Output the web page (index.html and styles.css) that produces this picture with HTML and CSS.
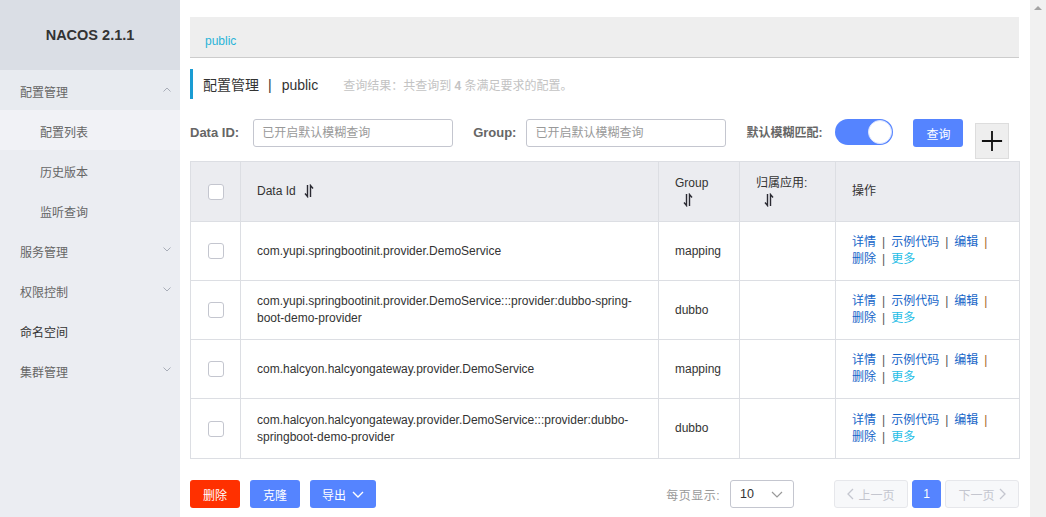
FILE: index.html
```html
<!DOCTYPE html>
<html lang="zh-CN">
<head>
<meta charset="utf-8">
<title>NACOS</title>
<link rel="stylesheet" href="styles.css">
</head>
<body>
<div class="app">
  <aside class="sidebar">
    <div class="brand">NACOS 2.1.1</div>
    <ul class="menu">
      <li class="menu-item group open">配置管理<svg class="chev" viewBox="0 0 8 5"><path d="M0.5 4.5 L4 1 L7.5 4.5"/></svg></li>
      <li class="menu-item sub active">配置列表</li>
      <li class="menu-item sub">历史版本</li>
      <li class="menu-item sub">监听查询</li>
      <li class="menu-item group">服务管理<svg class="chev" viewBox="0 0 8 5"><path d="M0.5 0.5 L4 4 L7.5 0.5"/></svg></li>
      <li class="menu-item group">权限控制<svg class="chev" viewBox="0 0 8 5"><path d="M0.5 0.5 L4 4 L7.5 0.5"/></svg></li>
      <li class="menu-item group dark">命名空间</li>
      <li class="menu-item group">集群管理<svg class="chev" viewBox="0 0 8 5"><path d="M0.5 0.5 L4 4 L7.5 0.5"/></svg></li>
    </ul>
  </aside>

  <main class="main">
    <div class="crumb"><span class="crumb-link">public</span></div>

    <div class="title-row">
      <span class="title">配置管理<span class="title-sep">|</span>public</span>
      <span class="result">查询结果：共查询到 <b>4</b> 条满足要求的配置。</span>
    </div>

    <div class="search-row">
      <label class="lbl lbl-id">Data ID:</label>
      <div class="input">已开启默认模糊查询</div>
      <label class="lbl lbl-group">Group:</label>
      <div class="input">已开启默认模糊查询</div>
      <label class="lbl lbl-fuzzy">默认模糊匹配:</label>
      <div class="switch"><span class="knob"></span></div>
      <button class="btn primary query">查询</button>
      <button class="plus"><svg viewBox="0 0 24 24"><path d="M12 1 V23 M1 12 H23"/></svg></button>
    </div>

    <table class="grid">
      <colgroup>
        <col class="c-check"><col class="c-id"><col class="c-group"><col class="c-app"><col class="c-op">
      </colgroup>
      <thead>
        <tr>
          <th class="center"><span class="cb"></span></th>
          <th>Data Id <svg class="sort" viewBox="0 0 10 14"><path d="M3.5 1 V12.5 L1 9.5"/><path d="M6.5 13 V1.5 L9 4.5"/></svg></th>
          <th>Group<br><span class="sort-line"><svg class="sort" viewBox="0 0 10 14"><path d="M3.5 1 V12.5 L1 9.5"/><path d="M6.5 13 V1.5 L9 4.5"/></svg></span></th>
          <th>归属应用:<br><span class="sort-line"><svg class="sort" viewBox="0 0 10 14"><path d="M3.5 1 V12.5 L1 9.5"/><path d="M6.5 13 V1.5 L9 4.5"/></svg></span></th>
          <th>操作</th>
        </tr>
      </thead>
      <tbody>
        <tr>
          <td class="center"><span class="cb"></span></td>
          <td class="id">com.yupi.springbootinit.provider.DemoService</td>
          <td>mapping</td>
          <td></td>
          <td class="ops"><a>详情</a><i>|</i><a>示例代码</a><i>|</i><a>编辑</a><i class="last">|</i><br><a>删除</a><i>|</i><a class="more">更多</a></td>
        </tr>
        <tr>
          <td class="center"><span class="cb"></span></td>
          <td class="id">com.yupi.springbootinit.provider.DemoService:::provider:dubbo-spring-<br>boot-demo-provider</td>
          <td>dubbo</td>
          <td></td>
          <td class="ops"><a>详情</a><i>|</i><a>示例代码</a><i>|</i><a>编辑</a><i class="last">|</i><br><a>删除</a><i>|</i><a class="more">更多</a></td>
        </tr>
        <tr>
          <td class="center"><span class="cb"></span></td>
          <td class="id">com.halcyon.halcyongateway.provider.DemoService</td>
          <td>mapping</td>
          <td></td>
          <td class="ops"><a>详情</a><i>|</i><a>示例代码</a><i>|</i><a>编辑</a><i class="last">|</i><br><a>删除</a><i>|</i><a class="more">更多</a></td>
        </tr>
        <tr class="last-row">
          <td class="center"><span class="cb"></span></td>
          <td class="id">com.halcyon.halcyongateway.provider.DemoService:::provider:dubbo-<br>springboot-demo-provider</td>
          <td>dubbo</td>
          <td></td>
          <td class="ops"><a>详情</a><i>|</i><a>示例代码</a><i>|</i><a>编辑</a><i class="last">|</i><br><a>删除</a><i>|</i><a class="more">更多</a></td>
        </tr>
      </tbody>
    </table>

    <div class="footer">
      <div class="actions">
        <button class="btn danger">删除</button>
        <button class="btn primary">克隆</button>
        <button class="btn primary export">导出 <svg class="down" viewBox="0 0 12 7"><path d="M1 1 L6 6 L11 1"/></svg></button>
      </div>
      <div class="pager">
        <span class="per">每页显示:</span>
        <div class="select">10<svg class="sel-chev" viewBox="0 0 12 7"><path d="M1 1 L6 6 L11 1"/></svg></div>
        <button class="pg disabled prev"><svg viewBox="0 0 7 12"><path d="M6 1 L1 6 L6 11"/></svg>上一页</button>
        <button class="pg current">1</button>
        <button class="pg disabled next">下一页<svg viewBox="0 0 7 12"><path d="M1 1 L6 6 L1 11"/></svg></button>
      </div>
    </div>
  </main>

  <div class="scrollbar"><span class="arrow-up"></span></div>
</div>
</body>
</html>
```

FILE: styles.css
```css
* { box-sizing: border-box; }
html, body { margin: 0; padding: 0; }
body {
  font-family: "Liberation Sans", "Noto Sans CJK SC", sans-serif;
  font-size: 12px;
  color: #333;
  background: #fff;
  width: 1046px;
  height: 517px;
  overflow: hidden;
}
.app { display: flex; height: 517px; }

/* sidebar */
.sidebar { width: 180px; flex: none; background: #ebedf2; }
.brand {
  height: 70px; background: #dadee5;
  display: flex; align-items: center; justify-content: center;
  font-weight: 700; font-size: 14.5px; color: #333; padding-bottom: 1px;
}
.menu { list-style: none; margin: 0; padding: 0; }
.menu-item {
  height: 40px; display: flex; align-items: center;
  padding-left: 20px; padding-right: 9px; padding-top: 2px;
  font-size: 12px; color: #666;
}
.menu-item.open { background: #e8ebf0; }
.menu-item.sub { padding-left: 40px; color: #666; }
.menu-item.active { background: #f1f2f6; }
.menu-item.dark { color: #333; }
.chev {
  width: 8px; height: 5px; margin-left: auto;
  fill: none; stroke: #a8adb8; stroke-width: 1;
}
.menu-item.group .chev { margin-top: -4px; }

/* main */
.main { width: 850px; flex: none; padding: 17px 11px 0 10px; }
.crumb {
  height: 41px; background: #eeeeee; border-bottom: 1px solid #cccccc;
  padding: 17px 15px 0;
  line-height: 14px;
}
.crumb-link { color: #2ab4d8; font-size: 12px; }

.title-row {
  margin-top: 11px; height: 30px;
  border-left: 3px solid #1a9cd3;
  display: flex; align-items: center; padding-left: 10px;
}
.title { font-size: 14px; color: #333; }
.title-sep { margin: 0 10px 0 9px; }
.result { margin-left: 25px; color: #c3c3c3; font-size: 12px; }
.result b { font-weight: 700; }

.search-row {
  margin-top: 20px; display: flex; align-items: flex-start; height: 40px;
}
.lbl {
  line-height: 28px; font-weight: 700; color: #666; font-size: 13px;
  white-space: nowrap;
}
.lbl-id { margin-right: 14px; }
.lbl-group { margin-left: 20px; margin-right: 10px; }
.lbl-fuzzy { margin-left: 20px; margin-right: 13px; font-size: 12px; }
.input {
  width: 200px; height: 28px; border: 1px solid #c4c6cf; border-radius: 3px;
  padding: 0 8px; line-height: 26px; color: #999; font-size: 12px;
}
.switch {
  width: 58px; height: 26px; border-radius: 13px; background: #5584ff;
  position: relative;
}
.knob {
  position: absolute; right: 1px; top: 1px;
  width: 24px; height: 24px; border-radius: 50%;
  background: #fff; border: 1px solid #d9e3ff;
}
.btn {
  height: 28px; border: none; border-radius: 3px; color: #fff;
  font-family: inherit; font-size: 12px; padding: 0; cursor: pointer;
  display: inline-flex; align-items: center; justify-content: center;
}
.btn.primary { background: #5584ff; }
.btn.danger { background: #ff3000; }
.query { width: 50px; margin-left: 20px; }
.plus {
  width: 34px; height: 36px; margin-left: 12px; margin-top: 4px;
  background: #eeeeee; border: 1px solid #dddddd; padding: 0;
  display: flex; align-items: center; justify-content: center;
}
.plus svg { width: 22px; height: 22px; fill: none; stroke: #111; stroke-width: 2; }

/* table */
.grid {
  width: 829px; border-collapse: collapse; table-layout: fixed;
  margin-top: 2px; border: 1px solid #dcdee3;
}
.c-check { width: 50px; }
.c-id { width: 418px; }
.c-group { width: 81px; }
.c-app { width: 96px; }
.c-op { width: 184px; }
.grid th, .grid td {
  border: 1px solid #dcdee3; padding: 0 16px;
  text-align: left; vertical-align: middle;
  font-size: 12px; line-height: 17px;
}
.grid th { background: #ebecf0; height: 60px; font-weight: 400; color: #333; }
.grid td { height: 59px; color: #333; }
.grid td.id { white-space: nowrap; }
.grid .last-row td { height: 60px; }
.grid .center { text-align: center; padding: 0; }
.cb {
  display: inline-block; width: 16px; height: 16px; vertical-align: middle;
  border: 1px solid #c4c6cf; border-radius: 3px; background: #fff;
}
.sort {
  width: 10px; height: 14px; vertical-align: -3px; margin-left: 5px;
  fill: none; stroke: #2b2b33; stroke-width: 1.4;
}
.sort-line { display: inline-block; padding-left: 8px; }
.sort-line .sort { margin-left: 0; }
.ops a { color: #1565c8; }
.ops a.more { color: #25bde6; }
.ops i { font-style: normal; color: #555; margin: 0 6px; }
.ops i.last { margin-right: 0; color: #a0662a; }

/* footer */
.footer {
  margin-top: 21px; display: flex; justify-content: space-between; align-items: center;
}
.actions { display: flex; gap: 10px; }
.actions .btn { width: 50px; }
.actions .export { width: 66px; }
.down { width: 12px; height: 7px; margin-left: 6px; fill: none; stroke: #fff; stroke-width: 1.4; }
.pager { display: flex; align-items: center; }
.per { color: #999; margin-right: 10px; letter-spacing: 0.5px; }
.select {
  width: 64px; height: 28px; border: 1px solid #c4c6cf; border-radius: 3px;
  display: flex; align-items: center; padding-left: 9px; color: #333; font-size: 12.5px;
  margin-right: 40px;
}
.sel-chev { width: 12px; height: 7px; margin-left: auto; margin-right: 10px; fill: none; stroke: #999; stroke-width: 1.2; }
.pg {
  height: 28px; border: 1px solid #e6e7eb; border-radius: 3px; background: #f7f8fa;
  color: #c4c6cf; font-family: inherit; font-size: 12px; padding: 0;
  display: inline-flex; align-items: center; justify-content: center; gap: 4px;
}
.pg svg { width: 7px; height: 12px; fill: none; stroke: #c4c6cf; stroke-width: 1.3; }
.pg.prev, .pg.next { width: 74px; }
.pg.current { width: 29px; background: #5584ff; border-color: #5584ff; color: #fff; margin: 0 4px; }

/* scrollbar */
.scrollbar { width: 16px; flex: none; background: #f1f1f1; position: relative; }
.arrow-up {
  position: absolute; left: 4px; top: 6px;
  width: 0; height: 0;
  border-left: 4px solid transparent; border-right: 4px solid transparent;
  border-bottom: 4px solid #a3a3a3;
}
```
